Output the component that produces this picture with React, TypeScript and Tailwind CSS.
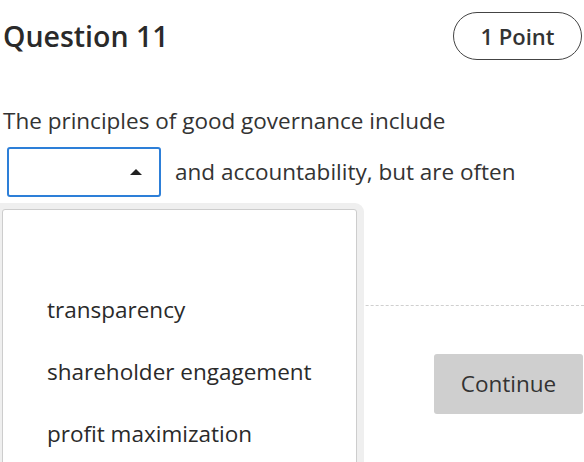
export default function App() {
  const options = ['transparency', 'shareholder engagement', 'profit maximization'];

  return (
    <div
      className="relative w-[584px] h-[462px] overflow-hidden bg-white text-[#333333]"
      style={{ fontFamily: '"Open Sans", "Noto Sans", sans-serif' }}
    >
      {/* header */}
      <div className="flex items-center justify-between pl-[3px] pr-[2px] pt-[12px]">
        <h1 className="text-[28.5px] font-semibold leading-[48px] text-[#2a2a2a]">Question 11</h1>
        <div className="h-[48px] w-[129px] rounded-full border border-[#444] flex items-center justify-center text-[22px] font-semibold text-[#333]">
          1 Point
        </div>
      </div>

      {/* question */}
      <p className="pl-[3px] mt-[46px] text-[22.5px] leading-[30px]">The principles of good governance include</p>
      <div className="flex items-center mt-[11px] pl-[7px]">
        <div className="h-[50px] w-[154px] rounded-[3px] border-2 border-[#2d7fd8] flex items-center justify-end pr-[17px]">
          <span className="block w-0 h-0 border-l-[6px] border-r-[6px] border-b-[6px] border-l-transparent border-r-transparent border-b-[#222]" />
        </div>
        <span className="ml-[14px] text-[22.5px] leading-[30px]">and accountability, but are often</span>
      </div>

      {/* divider */}
      <div className="mt-[108px] border-t border-dashed border-[#cfcfcf]" />

      {/* actions */}
      <div className="flex justify-end pr-[1px] mt-[48px]">
        <button className="h-[60px] w-[149px] rounded-[3px] bg-[#cfcfcf] text-[22.5px] text-[#333]">Continue</button>
      </div>

      {/* open dropdown list */}
      <div className="absolute left-0 top-[203px] w-[364px] h-[300px] bg-[#efefef] rounded-tr-[9px] pl-[2px] pr-[7px] pt-[6px]">
        <div className="h-full bg-white border border-[#cdcdcd] rounded-[3px] pt-[69px] pl-[44px]">
          {options.map((o) => (
            <div key={o} className="h-[62px] flex items-center text-[22.5px] text-[#2a2a2a]">
              {o}
            </div>
          ))}
        </div>
      </div>
    </div>
  );
}
